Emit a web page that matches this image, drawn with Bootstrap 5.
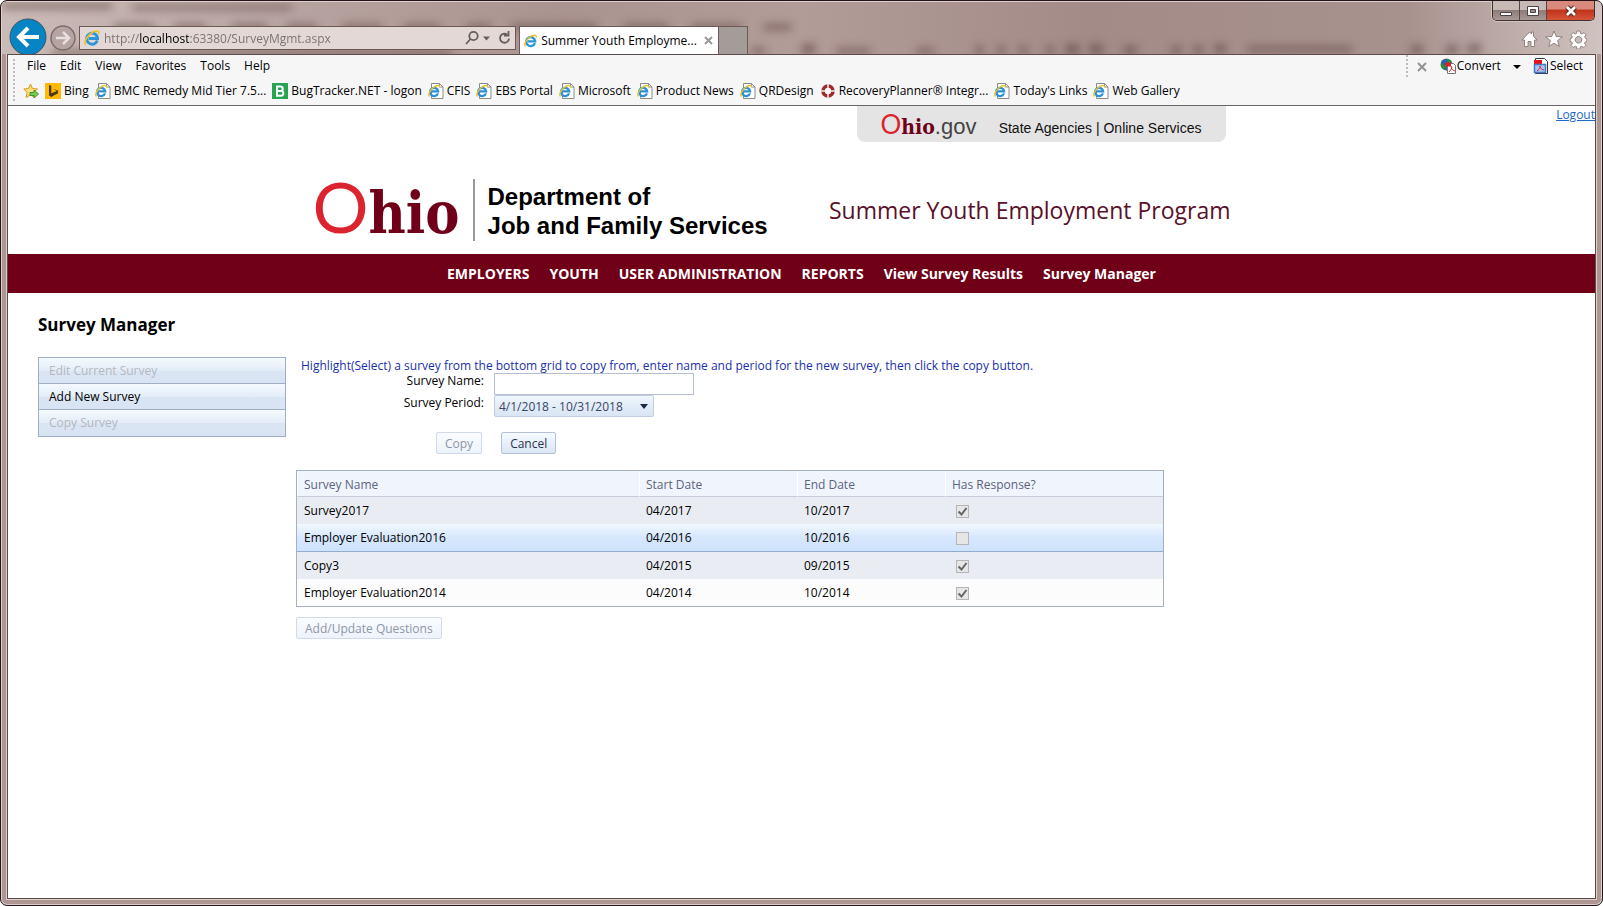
<!DOCTYPE html>
<html lang="en">
<head>
<meta charset="utf-8">
<meta name="viewport" content="width=device-width, initial-scale=1">
<title>Summer Youth Employment Program</title>
<link href="https://cdn.jsdelivr.net/npm/bootstrap@5.3.0/dist/css/bootstrap.min.css" rel="stylesheet">
<style>
:root{--maroon:#6f0018;--edge:#9eaec4;--mauve:#ae9792}
body{font-family:"Open Sans","Noto Sans",sans-serif;font-size:12px;line-height:16px;color:#000;background:#fff}
button,input,select{font:inherit}
.frame{border:1px solid #24141a;border-radius:7px;background:var(--mauve);box-shadow:inset 0 0 0 1px #ddcfcb;padding:0 7px 6px;overflow:hidden}
.view{border:1px solid #5d4a4a;outline:1px solid #ddcfcb;margin:0 -1px;background:#fff}
/* title bar */
.titlebar{height:53px;margin:0 -7px;padding:0 7px;position:relative}
.glass{position:absolute;inset:1px;width:calc(100% - 2px);height:52px}
.titlebar .bar-row{position:relative;height:53px}
.round{border:0;background:none;padding:0;line-height:0}
.go-back{margin-top:17px}
.go-on{margin-top:23px}
.address{width:437px;height:24px;background:#e3d8d5;border:1px solid #6b5a58;margin:25px 0 0 3px;gap:4px}
.url{border:0;outline:0;min-width:0;height:20px;padding:0;color:transparent;background:linear-gradient(90deg,#77706f 35px,#000 35px,#000 85px,#77706f 85px);-webkit-background-clip:text;background-clip:text}
.page-tab{width:200px;height:28px;background:#fff;border:1px solid #6b5a58;border-bottom:0;margin:25px 0 0 3px;gap:4px}
.new-tab{width:29px;height:28px;background:#a39c98;border:1px solid #6b5a58;border-left:0;border-bottom:0;margin-top:25px}
.win-buttons{height:20px;border:1px solid #3d3030;border-top:0;border-radius:0 0 5px 5px;overflow:hidden;box-shadow:0 0 0 1px #d3c4c0}
.win-buttons button{border:0;padding:0;line-height:0;width:27px;background:linear-gradient(#c7b9b6 45%,#8f7b7a 50%,#a99896);border-right:1px solid #54464a}
.win-buttons .shut{width:47px;border:0;background:linear-gradient(#d98a7c 40%,#c2341a 50%,#d4553a)}
/* menus and favourites */
.toolbars{background:#f6f6f7;border-bottom:1px solid #6c666a;height:51px;padding-left:5px}
.toolbars button,.toolbars a{border:0;background:none;padding:0;color:#000;text-decoration:none;white-space:nowrap}
.grip{border-left:2px dotted #bcbcbc}
.menu{height:22px;gap:14px;padding-left:12px}
.favs{height:28px;gap:6px;padding-left:8px}
.favs a{display:flex;align-items:center;gap:3px}
/* site header */
.site-head{max-width:1000px;height:148px}
.gov{width:369px;height:36px;margin-left:555px;background:#e4e4e4;border-radius:0 0 8px 8px;font-family:"Liberation Sans",Arial,sans-serif;font-size:14px;color:#111}
.gov .mini{font-size:22px;line-height:36px;color:#444;padding-top:3px}
.gov .links{padding-top:8px}
.big-o{font-family:Lato,"Liberation Sans",sans-serif;color:#dc2430}
.slab{font-family:"DejaVu Serif Condensed","DejaVu Serif",serif;font-weight:700;font-stretch:condensed;color:var(--maroon)}
.mini .big-o{font-size:26px}
.mini .slab{font-size:21px}
.logo{padding:34px 71px 0 11px}
.logo .big-o{font-size:70px;line-height:60px}
.logo .slab{font-size:57px;line-height:60px}
.dept{border-left:2px solid #9b9b9b;height:62px;padding:3px 0 0 13px;margin-left:13px;font:700 24px/29px "Liberation Sans",Arial,sans-serif}
.program{font-size:23px;line-height:32px;color:#5a1028}
.site-nav{background:var(--maroon);height:39px;gap:20px}
.site-nav a{color:#fff;font-weight:700;font-size:14px;text-decoration:none}
/* page */
.work{padding:22px 30px}
.work h1{font-size:17px;line-height:20px;font-weight:700;margin:0}
.work-cols{gap:10px;margin-top:22px}
.side{width:248px;border:1px solid var(--edge)}
.side button{display:block;width:100%;height:26px;border:0;border-bottom:1px solid var(--edge);padding:0 10px;text-align:left;background:linear-gradient(#f4faff,#e3edf8 50%,#dae5f4 52%,#d8e4f3)}
.side button:last-child{border-bottom:0}
.side button:disabled{color:#b3b8c0}
.hint{color:#1b2fae;padding:1px 0 0 5px;line-height:15px}
.copy-form{display:grid;grid-template-columns:188px 200px;column-gap:10px}
.copy-form label{text-align:right}
.copy-form input{height:22px;border:1px solid #b4c0d0;padding:0 4px}
.copy-form select{height:22px;width:160px;border:1px solid #c0cde0;border-radius:2px;padding:1px 4px 0;appearance:none;color:#39465f;background:url("data:image/svg+xml,%3Csvg xmlns='http://www.w3.org/2000/svg' viewBox='0 0 8 5'%3E%3Cpath d='M0 0h8L4 5z' fill='%231b2a44'/%3E%3C/svg%3E") no-repeat right 5px center/8px 5px,linear-gradient(#eef5fd,#d9e5f4)}
.actions{gap:19px;padding:15px 0 16px 140px}
.soft{height:22px;border:1px solid #b4c0d8;border-radius:2px;padding:1px 8px 0;color:#26344d;background:linear-gradient(#f6faff,#e8f0fa 50%,#dbe6f5)}
.soft:disabled{color:#8d96a5;border-color:#d0daea;background:linear-gradient(#fafcff,#edf3fc)}
.grid-box{width:868px;border:1px solid #a4b1c4;margin-bottom:10px}
.grid-box table{margin:0;table-layout:fixed;width:100%;border-collapse:separate;border-spacing:0}
.grid-box th{height:26px;font-weight:400;color:#5a6580;background:#f0f4fc;border-bottom:1px solid #c5cddb;border-left:1px solid #fff;padding:2px 6px 0}
.grid-box td{height:27px;padding:1px 7px 0}
.grid-box .odd td{background:#e9edf3}
.grid-box .even td{background:#fcfcfc}
.grid-box .picked td{height:28px;background:linear-gradient(#f2f8ff,#d6e7fd 50%,#cfe3fd);border-bottom:1px solid #93abcf}
.tick{appearance:none;display:block;width:13px;height:13px;border:1px solid #b5b5b5;background:#e6e6e6;margin:0 0 0 4px}
.tick:checked{background:#e6e6e6 url("data:image/svg+xml,%3Csvg xmlns='http://www.w3.org/2000/svg' viewBox='0 0 11 11'%3E%3Cpath d='M1.5 5.5L4.5 8.5L9.5 2' fill='none' stroke='%23666' stroke-width='2'/%3E%3C/svg%3E")}
.logout{color:#2067c8;padding-top:1px}
</style>
</head>
<body>
<svg width="0" height="0" class="position-absolute" aria-hidden="true">
<defs>
<symbol id="ie" viewBox="0 0 16 16"><path d="M13.300 10.500A5.500 5.500 0 1 1 13.600 8.500H4.500" fill="none" stroke="#2c96d8" stroke-width="2.800"/><path d="M2 14.800C-1 12 3.500 5 9 2C12.500.4 15.500.6 14.900 3.800" fill="none" stroke="#edc321" stroke-width="1.600"/></symbol>
<symbol id="iepage" viewBox="0 0 16 16"><path d="M3.500.5h8l3.500 3.500v11.500h-11.500z" fill="#fff" stroke="#8b8b8b"/><path d="M11.500.5v3.500H15" fill="none" stroke="#8b8b8b"/><path d="M10 10.300A4.100 4.100 0 1 1 10.200 8.400H3.500" fill="none" stroke="#2c90d8" stroke-width="2.200"/><path d="M1.500 13.500C-.8 11 3 5.500 7 3.300C9.800 2 12 2.500 11.300 4.500" fill="none" stroke="#e5c52e" stroke-width="1.400"/></symbol>
</defs></svg>
<div class="frame min-vh-100 d-flex flex-column">
<header class="titlebar">
<svg class="glass" viewBox="0 0 1600 52" preserveAspectRatio="none" aria-hidden="true">
<defs><linearGradient id="g" x1="0" x2="1" y1="0" y2="0"><stop offset="0" stop-color="#cbbbb7"/><stop offset=".18" stop-color="#b7a39f"/><stop offset=".35" stop-color="#aa9490"/><stop offset=".5" stop-color="#b29c97"/><stop offset=".68" stop-color="#a38c88"/><stop offset=".88" stop-color="#a8928e"/><stop offset="1" stop-color="#d0c2bf"/></linearGradient><filter id="b" x="-20%" y="-100%" width="140%" height="300%"><feGaussianBlur stdDeviation="4"/></filter></defs>
<path fill="url(#g)" d="M0 0h1600v52H0z"/>
<g filter="url(#b)" fill="#5d4540" opacity=".6"><path d="M0 1h110v6H0zM130 3h160v5H130zM112 22h40v6h-40zM172 22h32v6h-32zM230 22h35v6h-35zM285 22h30v6h-30zM340 22h40v6h-40zM402 22h36v6h-36zM465 22h24v6h-24zM510 22h85v6h-85zM622 22h45v6h-45zM690 22h50v6h-50zM762 22h28v6h-28zM50 48h400v6H50zM750 46h14v6h-14zM800 42h14v10h-14zM835 46h34v6h-34zM915 46h18v6h-18zM974 44h8v8h-8zM996 44h8v8h-8zM1018 44h8v8h-8zM1045 44h8v8h-8zM1064 42h14v10h-14zM1088 42h14v10h-14zM1122 44h14v8h-14zM1170 44h10v8h-10zM1192 44h10v8h-10zM1213 42h12v9h-12zM1246 44h105v6h-105zM1410 43h12v9h-12zM1445 43h12v9h-12zM1466 42h14v9h-14z"/></g>
</svg>
<div class="bar-row d-flex align-items-start">
<button class="round go-back" aria-label="Back"><svg width="40" height="36"><circle cx="20" cy="19" r="18" fill="#0784c3" stroke="#3b5664"/><path d="M31 19H12M20 10l-9 9 9 9" fill="none" stroke="#fff" stroke-width="4"/></svg></button>
<button class="round go-on" aria-label="Forward"><svg width="28" height="28"><circle cx="15" cy="14" r="12" fill="#b5a4a1" stroke="#7c6c6b" stroke-width="1.500"/><path d="M8 14h13M15 8l6 6-6 6" fill="none" stroke="#e7e0de" stroke-width="2.500"/></svg></button>
<div class="address d-flex align-items-center px-1">
<svg width="16" height="16"><use href="#ie"/></svg>
<input class="url flex-grow-1" aria-label="Address" value="http://localhost:63380/SurveyMgmt.aspx">
<svg width="46" height="16" fill="none" stroke="#665e5d" stroke-width="1.800"><circle cx="8.500" cy="6" r="4.200"/><path d="M5.500 9L1 14"/><path d="M18 6.500h7l-3.500 4z" fill="#665e5d" stroke="none"/><path d="M44 8.500a4.500 4.500 0 1 1-2-4M43.500 1v4.500H39"/></svg>
</div>
<div class="page-tab d-flex align-items-center px-1"><svg width="16" height="16"><use href="#ie"/></svg><span class="flex-grow-1 text-nowrap">Summer Youth Employme...</span><svg width="16" height="10"><path d="M4 1l7 7M11 1L4 8" stroke="#999" stroke-width="2"/></svg></div>
<div class="new-tab"></div>
<div class="ms-auto d-flex flex-column align-items-end">
<div class="win-buttons d-flex">
<button aria-label="Minimize"><svg width="14" height="16"><path d="M1.500 9.500h11v3h-11z" fill="#fff" stroke="#4d4347"/></svg></button>
<button aria-label="Maximize"><svg width="14" height="16"><path d="M1.500 3.500h11v9h-11z" fill="#fff" stroke="#4d4347"/><path d="M4.500 6.500h5v3h-5z" fill="#9b8c8b" stroke="#4d4347"/></svg></button>
<button class="shut" aria-label="Close"><svg width="14" height="16"><path d="M3 4l8 8M11 4l-8 8" stroke="#5a2620" stroke-width="5"/><path d="M3 4l8 8M11 4l-8 8" stroke="#fff" stroke-width="2.800"/></svg></button>
</div>
<svg class="mt-2 me-2" width="66" height="20" fill="#fff" stroke="#7d6d6b" stroke-width=".8"><path d="M1 11L8.500 3l2 2V3h2v4l3.500 4h-2.500v6.500h-3.500v-5H7v5H3.500V11z"/><path d="M33 2l2.200 5.500 6 .3-4.600 3.800 1.600 5.800-5.200-3.200-5.200 3.200 1.600-5.800-4.600-3.800 6-.3z"/><path fill-rule="evenodd" d="M56 2h3l.5 2.300 1.500.7 2-1.400 2 2.100-1.300 2 .6 1.500 1.500.6v2.700l-1.700.6-.5 1.300 1.300 2-2.100 2.100-2-1.300-1.400.5-.5 2.300h-2.800l-.5-2.300-1.400-.5-2 1.300-2.100-2.100 1.300-2-.5-1.300-1.700-.6V9.800l1.600-.6.600-1.500-1.300-2 2-2.100 2 1.400 1.500-.7zM57.500 7.500a3.300 3.300 0 1 0 .01 0z"/></svg>
</div>
</div>
</header>
<div class="view flex-grow-1">
<div class="toolbars d-flex">
<div class="grip my-1"></div>
<div class="flex-grow-1">
<div class="d-flex">
<nav class="menu d-flex align-items-center flex-grow-1" aria-label="Menu bar"><button>File</button><button>Edit</button><button>View</button><button>Favorites</button><button>Tools</button><button>Help</button></nav>
<div class="d-flex align-items-center pe-2 me-1"><span class="grip align-self-stretch"></span>
<button class="ms-2 me-2 pe-1 lh-1" aria-label="Close toolbar"><svg width="12" height="10"><path d="M2 1l8 8M10 1L2 9" stroke="#929292" stroke-width="2"/></svg></button>
<button class="d-flex align-items-center"><svg width="17" height="16"><circle cx="6.500" cy="6.500" r="6" fill="#2d8b3f"/><path d="M1 5a6 6 0 0 1 6-4l1 4-4 2zM4 11l4-3 2 3-3 1.500z" fill="#2b62b0"/><path d="M7.500 5.500h6l2 2v8h-8z" fill="#fff" stroke="#777"/><path d="M5 4.500h6v4H5z" fill="#d6232a"/><path d="M9 14c3-3 3-5 2.500-5.500S11 12 15 13" fill="none" stroke="#d6232a"/></svg>Convert</button>
<button class="mx-2 px-1 lh-1" aria-label="Convert options"><svg width="8" height="6"><path d="M0 1h8L4 5z"/></svg></button>
<button class="d-flex align-items-center"><svg width="17" height="16"><path d="M2.500.5h9l3 3v12h-12z" fill="#fff" stroke="#333"/><path d="M1 2h8v5H1z" fill="#e3151a"/><path d="M1.500 6.500h11v8h-11z" fill="#a9c6f2" stroke="#4774c4" stroke-width="1.500"/><path d="M4 13c4-3 4-5 3-5s0 3 4 4" fill="none" stroke="#d6232a"/></svg>Select</button>
</div>
</div>
<nav class="favs d-flex align-items-center" aria-label="Favorites bar">
<button class="lh-1" aria-label="Add to favorites"><svg width="16" height="16"><path d="M7.500 1l2 4.500 5 .5-3.700 3.500 1 5-4.300-2.500-4.500 2.500 1.200-5L.8 6l4.700-.5z" fill="#fbe07c" stroke="#d99a1c"/><path d="M7 9.500h4V7l4.500 4-4.500 4v-2.500H7z" fill="#7ccc4c" stroke="#3b9431"/></svg></button>
<a href="#"><svg width="16" height="16"><path fill="#ffb900" d="M0 0h16v16H0z"/><path d="M4 2l2.300.8v7.400L12 8 7.500 5.700 13 7.500v2.700L6.300 14 4 12.500z" fill="#4d3b10"/></svg>Bing</a>
<a href="#"><svg width="16" height="16"><use href="#iepage"/></svg>BMC Remedy Mid Tier 7.5...</a>
<a href="#"><svg width="16" height="16"><path fill="#26a551" d="M0 0h16v16H0z"/><path d="M5 3.500h3.500a2.200 2.200 0 0 1 0 4.500H5h4a2.300 2.300 0 0 1 0 4.700H5z" fill="none" stroke="#fff" stroke-width="2"/></svg>BugTracker.NET - logon</a>
<a href="#"><svg width="16" height="16"><use href="#iepage"/></svg>CFIS</a>
<a href="#"><svg width="16" height="16"><use href="#iepage"/></svg>EBS Portal</a>
<a href="#"><svg width="16" height="16"><use href="#iepage"/></svg>Microsoft</a>
<a href="#"><svg width="16" height="16"><use href="#iepage"/></svg>Product News</a>
<a href="#"><svg width="16" height="16"><use href="#iepage"/></svg>QRDesign</a>
<a href="#"><svg width="16" height="16"><circle cx="8" cy="8" r="5" fill="none" stroke="#a12a2c" stroke-width="3.600"/><path d="M8 1v4M8 11v4M1 8h4M11 8h4" stroke="#eee" stroke-width="1.500"/></svg>RecoveryPlanner® Integr...</a>
<a href="#"><svg width="16" height="16"><use href="#iepage"/></svg>Today's Links</a>
<a href="#"><svg width="16" height="16"><use href="#iepage"/></svg>Web Gallery</a>
</nav>
</div>
</div>
<div class="position-relative">
<a class="logout position-absolute top-0 end-0" href="#">Logout</a>
<header class="site-head mx-auto">
<div class="gov d-flex align-items-center px-4">
<span class="mini text-nowrap"><span class="big-o">O</span><span class="slab">hio</span>.gov</span>
<span class="links ms-auto">State Agencies | Online Services</span>
</div>
<div class="logo d-flex align-items-center">
<div class="text-nowrap d-flex align-items-baseline"><span class="big-o">O</span><span class="slab">hio</span></div>
<div class="dept text-nowrap">Department of<br>Job and Family Services</div>
<div class="program text-nowrap ms-auto">Summer Youth Employment Program</div>
</div>
</header>
<nav class="site-nav d-flex justify-content-center align-items-center" aria-label="Site">
<a href="#">EMPLOYERS</a><a href="#">YOUTH</a><a href="#">USER ADMINISTRATION</a><a href="#">REPORTS</a><a href="#">View Survey Results</a><a href="#">Survey Manager</a>
</nav>
<main class="work">
<h1>Survey Manager</h1>
<div class="work-cols d-flex align-items-start">
<div class="side flex-shrink-0"><button disabled>Edit Current Survey</button><button>Add New Survey</button><button disabled>Copy Survey</button></div>
<div>
<p class="hint mb-0">Highlight(Select) a survey from the bottom grid to copy from, enter name and period for the new survey, then click the copy button.</p>
<form class="copy-form">
<label for="sname">Survey Name:</label><input id="sname" type="text">
<label for="speriod">Survey Period:</label><select id="speriod"><option>4/1/2018 - 10/31/2018</option></select>
</form>
<div class="actions d-flex"><button class="soft" type="button" disabled>Copy</button><button class="soft" type="button">Cancel</button></div>
<div class="grid-box">
<table>
<colgroup><col style="width:342px"><col style="width:158px"><col style="width:148px"><col></colgroup>
<thead><tr><th>Survey Name</th><th>Start Date</th><th>End Date</th><th>Has Response?</th></tr></thead>
<tbody>
<tr class="odd"><td>Survey2017</td><td>04/2017</td><td>10/2017</td><td><input class="tick" type="checkbox" aria-label="Survey2017 has response" checked disabled></td></tr>
<tr class="picked"><td>Employer Evaluation2016</td><td>04/2016</td><td>10/2016</td><td><input class="tick" type="checkbox" aria-label="Employer Evaluation2016 has response" disabled></td></tr>
<tr class="odd"><td>Copy3</td><td>04/2015</td><td>09/2015</td><td><input class="tick" type="checkbox" aria-label="Copy3 has response" checked disabled></td></tr>
<tr class="even"><td>Employer Evaluation2014</td><td>04/2014</td><td>10/2014</td><td><input class="tick" type="checkbox" aria-label="Employer Evaluation2014 has response" checked disabled></td></tr>
</tbody>
</table>
</div>
<button class="soft" type="button" disabled>Add/Update Questions</button>
</div>
</div>
</main>
</div>
</div>
</div>
<script src="https://cdn.jsdelivr.net/npm/bootstrap@5.3.0/dist/js/bootstrap.bundle.min.js"></script>
</body>
</html>
